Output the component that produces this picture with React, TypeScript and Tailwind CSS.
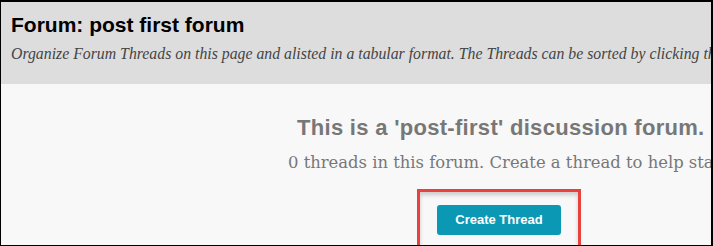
import React from "react";

export default function App() {
  return (
    <div className="w-[713px] h-[246px] overflow-hidden border-t-2 border-l border-r-2 border-b border-black bg-[#f8f8f8] box-border">
      <div className="w-[1000px]">
        <div className="h-[82px] bg-[#dddddd] pl-[10px] pt-[10px]">
          <h1 className="font-['Liberation_Sans',Arial,sans-serif] font-bold text-[21px] leading-[26px] text-black">
            Forum: post first forum
          </h1>
          <p className="mt-[7px] whitespace-nowrap font-['Liberation_Serif',Georgia,serif] italic text-[15.8px] leading-[18px] text-[#444]">
            Organize Forum Threads on this page and alisted in a tabular format. The Threads can be sorted by clicking the column headers.
          </p>
        </div>
        <div className="pl-[287px] pt-[31px]">
          <h2 className="ml-[9px] whitespace-nowrap font-['Liberation_Sans',Arial,sans-serif] font-bold text-[22px] leading-[26px] tracking-[0.3px] text-[#777]">
            This is a 'post-first' discussion forum.
          </h2>
          <p className="mt-[11px] whitespace-nowrap font-['DejaVu_Serif',Georgia,serif] text-[16.4px] leading-[22px] text-[#777]">
            0 threads in this forum. Create a thread to help start the discussion.
          </p>
          <div className="ml-[129px] mt-[15px] w-fit border-[3px] border-[#e8423f] shadow-[inset_0_3px_4px_rgba(0,0,0,0.18)] px-[17px] pt-[13px] pb-[16px]">
            <button className="h-[30px] w-[124px] rounded-[3px] bg-[#0a98b4] text-white font-['Liberation_Sans',Arial,sans-serif] font-bold text-[13px]">
              Create Thread
            </button>
          </div>
        </div>
      </div>
    </div>
  );
}
